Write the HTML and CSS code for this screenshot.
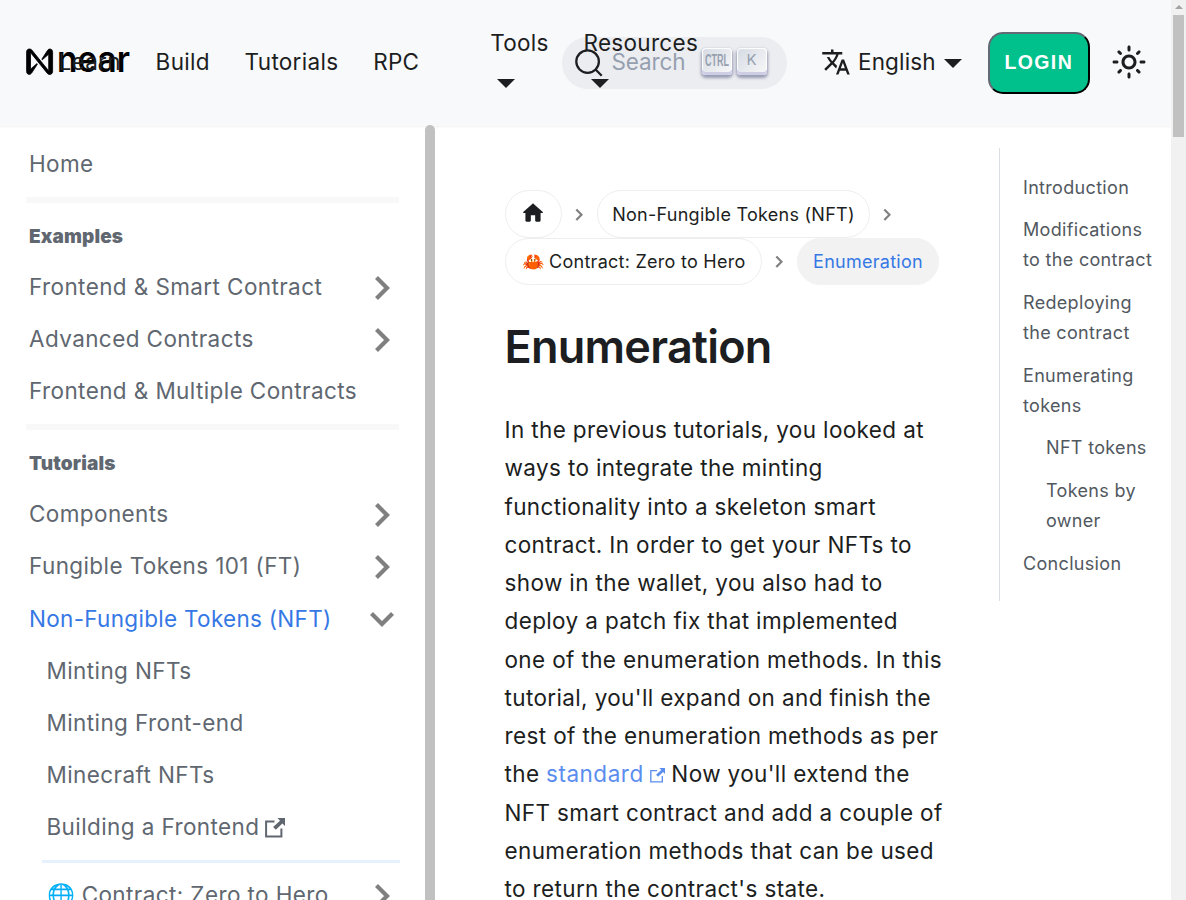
FILE: index.html
```html
<!DOCTYPE html>
<html lang="en">
<head>
<meta charset="utf-8">
<title>Enumeration | NEAR Documentation</title>
<link rel="stylesheet" href="styles.css">
</head>
<body>
<div class="window">
<div class="page">
  <header class="navbar">
    <svg class="logo" width="104" height="28" viewBox="0 0 104 28" role="img" aria-label="near">
      <path class="mark" d="M3.300 1C1.700 1 .6 2.200.6 3.700v20c0 1.500 1.200 2.700 2.700 2.700.9 0 1.800-.5 2.300-1.300l5.700-8.800c.2-.4-.2-.8-.6-.5l-5.500 4.800c-.3.2-.7.100-.7-.3V5.600c0-.4.5-.5.7-.200l16.200 20c.5.600 1.200 1 2 1h.5c1.500 0 2.700-1.200 2.700-2.700v-20C26.600 2.200 25.400 1 23.900 1c-.9 0-1.800.5-2.300 1.300l-5.700 8.800c-.2.400.2.800.6.500l5.500-4.800c.3-.2.7-.1.700.3v14.700c0 .400-.5.500-.7.200L5.800 2c-.5-.6-1.200-1-2-1z"/>
      <text class="wordmark" x="31" y="23.500" textLength="73" lengthAdjust="spacingAndGlyphs">near</text>
    </svg>
    <nav class="links">
      <a>Learn</a><a>Build</a><a>Tutorials</a><a>RPC</a>
      <span class="bar"></span>
      <a class="drop tools">Tools<i class="caret"></i></a>
      <a class="drop resources">Resources<i class="caret"></i></a>
    </nav>
    <div class="search">
      <svg width="30" height="30" viewBox="0 0 20 20"><path d="M14.386 14.386l4.088 4.088-4.088-4.088c-2.942 2.942-7.711 2.942-10.653 0-2.942-2.942-2.942-7.711 0-10.653 2.942-2.942 7.711-2.942 10.653 0 2.942 2.942 2.942 7.711 0 10.653z" fill="none" stroke="#1c1e21" stroke-width="1.5"/></svg>
      <span class="placeholder">Search</span>
      <kbd><svg width="24" height="18" viewBox="0 0 24 18"><text class="ctrl" x="0" y="15" textLength="24" lengthAdjust="spacingAndGlyphs">CTRL</text></svg></kbd>
      <kbd class="key-k">K</kbd>
    </div>
    <div class="language">
      <svg width="30" height="30" viewBox="0 0 24 24"><path fill="currentColor" d="M12.870 15.070l-2.540-2.510.030-.030c1.740-1.940 2.980-4.170 3.710-6.530H17V4h-7V2H8v2H1v1.990h11.170C11.500 7.920 10.440 9.750 9 11.350 8.070 10.320 7.300 9.190 6.690 8h-2c.73 1.630 1.730 3.170 2.980 4.560l-5.090 5.020L4 19l5-5 3.110 3.110.76-2.040zM18.500 10h-2L12 22h2l1.120-3h4.750L21 22h2l-4.500-12zm-2.620 7l1.620-4.330L19.120 17h-3.240z"/></svg>
      <span>English</span><i class="caret"></i>
    </div>
    <button class="login">LOGIN</button>
    <svg class="sun" width="36" height="36" viewBox="0 0 24 24"><path fill="currentColor" d="M12,9c1.650,0,3,1.350,3,3s-1.350,3-3,3s-3-1.350-3-3S10.350,9,12,9 M12,7c-2.760,0-5,2.240-5,5s2.240,5,5,5s5-2.240,5-5 S14.760,7,12,7L12,7z M2,13l2,0c0.550,0,1-0.450,1-1s-0.450-1-1-1l-2,0c-0.550,0-1,0.450-1,1S1.450,13,2,13z M20,13l2,0c0.550,0,1-0.450,1-1 s-0.450-1-1-1l-2,0c-0.550,0-1,0.450-1,1S19.450,13,20,13z M11,2v2c0,0.550,0.450,1,1,1s1-0.450,1-1V2c0-0.550-0.450-1-1-1S11,1.450,11,2z M11,20v2c0,0.550,0.450,1,1,1s1-0.450,1-1v-2c0-0.550-0.450-1-1-1C11.450,19,11,19.450,11,20z M5.990,4.580c-0.390-0.390-1.030-0.390-1.410,0 c-0.390,0.390-0.390,1.030,0,1.410l1.060,1.060c0.390,0.390,1.030,0.390,1.410,0s0.390-1.030,0-1.410L5.990,4.580z M18.360,16.950 c-0.390-0.390-1.030-0.390-1.410,0c-0.390,0.390-0.390,1.030,0,1.410l1.060,1.060c0.390,0.390,1.030,0.390,1.410,0c0.390-0.390,0.390-1.030,0-1.410 L18.360,16.950z M19.420,5.990c0.390-0.390,0.390-1.030,0-1.410c-0.390-0.390-1.030-0.390-1.410,0l-1.060,1.060c-0.390,0.390-0.390,1.030,0,1.410 s1.030,0.390,1.410,0L19.420,5.990z M7.050,18.360c0.390-0.390,0.390-1.030,0-1.410c-0.390-0.390-1.030-0.390-1.410,0l-1.060,1.060 c-0.390,0.390-0.390,1.030,0,1.410s1.030,0.390,1.410,0L7.050,18.360z"/></svg>
  </header>

  <div class="columns">
    <aside class="sidebar">
      <ul class="menu">
        <li><a>Home</a></li>
        <li class="divider"></li>
        <li class="heading">Examples</li>
        <li><a>Frontend &amp; Smart Contract</a><svg class="chev" viewBox="0 0 18 26"><path d="M3.500 2.500 14 13 3.500 23.500"/></svg></li>
        <li><a>Advanced Contracts</a><svg class="chev" viewBox="0 0 18 26"><path d="M3.500 2.500 14 13 3.500 23.500"/></svg></li>
        <li><a>Frontend &amp; Multiple Contracts</a></li>
        <li class="divider"></li>
        <li class="heading">Tutorials</li>
        <li><a>Components</a><svg class="chev" viewBox="0 0 18 26"><path d="M3.500 2.500 14 13 3.500 23.500"/></svg></li>
        <li><a>Fungible Tokens 101 (FT)</a><svg class="chev" viewBox="0 0 18 26"><path d="M3.500 2.500 14 13 3.500 23.500"/></svg></li>
        <li class="active"><a>Non-Fungible Tokens (NFT)</a><svg class="chev open" viewBox="0 0 18 26"><path d="M3.500 2.500 14 13 3.500 23.500"/></svg></li>
        <li class="sub"><a>Minting NFTs</a></li>
        <li class="sub"><a>Minting Front-end</a></li>
        <li class="sub"><a>Minecraft NFTs</a></li>
        <li class="sub"><a>Building a Frontend</a><svg class="ext" width="20" height="20" viewBox="0 0 20 20"><path d="M9.500 3.500H1.100v14.900h15.300V10.500" fill="none" stroke="currentColor" stroke-width="2"/><path fill="currentColor" d="M12.500 0H20v8l-2.600-2.600-6.600 6.300-2.700-2.600L15 2.700z"/></svg></li>
        <li class="subdivider"></li>
        <li class="sub last"><a><span class="globe">🌐</span> Contract: Zero to Hero</a><svg class="chev" viewBox="0 0 18 26"><path d="M3.500 2.500 14 13 3.500 23.500"/></svg></li>
      </ul>
      <div class="side-thumb"></div>
    </aside>

    <main class="article">
      <ul class="crumbs">
        <li><a class="pill home"><svg width="26" height="26" viewBox="0 0 24 24"><path d="M10 19v-5h4v5c0 .550.450 1 1 1h3c.550 0 1-.450 1-1v-7h1.700c.460 0 .680-.570.330-.870L12.670 3.600c-.380-.340-.960-.340-1.340 0l-8.360 7.530c-.340.300-.130.870.330.870H5v7c0 .550.450 1 1 1h3c.550 0 1-.450 1-1z" fill="currentColor"/></svg></a><svg class="sep" viewBox="0 0 8 14"><path d="M1.300 1.500 6.500 6.700 1.300 12"/></svg></li>
        <li><a class="pill nft">Non-Fungible Tokens (NFT)</a><svg class="sep" viewBox="0 0 8 14"><path d="M1.300 1.500 6.500 6.700 1.300 12"/></svg></li>
        <li><a class="pill zero">🦀 Contract: Zero to Hero</a><svg class="sep" viewBox="0 0 8 14"><path d="M1.300 1.500 6.500 6.700 1.300 12"/></svg></li>
        <li><a class="pill current">Enumeration</a></li>
      </ul>
      <h1>Enumeration</h1>
      <p>In the previous tutorials, you looked at<br>ways to integrate the minting<br>functionality into a skeleton smart<br>contract. In order to get your NFTs to<br>show in the wallet, you also had to<br>deploy a patch fix that implemented<br>one of the enumeration methods. In this<br>tutorial, you'll expand on and finish the<br>rest of the enumeration methods as per<br>the <a class="std">standard<svg width="15" height="15" viewBox="0 0 20 20"><path d="M9.500 3.500H1.100v14.900h15.300V10.500" fill="none" stroke="currentColor" stroke-width="1.800"/><path fill="currentColor" d="M12.500 0H20v8l-2.600-2.600-6.600 6.300-2.700-2.600L15 2.700z"/></svg></a> Now you'll extend the<br>NFT smart contract and add a couple of<br>enumeration methods that can be used<br>to return the contract's state.</p>
    </main>

    <nav class="toc">
      <a>Introduction</a>
      <a>Modifications<br>to the contract</a>
      <a>Redeploying<br>the contract</a>
      <a>Enumerating<br>tokens</a>
      <a class="nested">NFT tokens</a>
      <a class="nested">Tokens by<br>owner</a>
      <a>Conclusion</a>
    </nav>
  </div>
</div>
<div class="scrollbar"><i class="arrow"></i><div class="thumb"></div></div>
</div>
</body>
</html>
```

FILE: styles.css
```css
* { box-sizing: border-box; }
html, body { margin: 0; height: 100%; overflow: hidden; }
body { background: #fff; color: #1c1e21; font-family: Inter, "Noto Sans", sans-serif; font-size: 22.5px; }
ul { list-style: none; margin: 0; padding: 0; }
.window { display: flex; height: 900px; }
.page { width: 1171px; height: 900px; overflow: hidden; display: flex; flex-direction: column; }

.navbar { flex: none; height: 126px; padding: 0 0 2px 26px; background: #f8f9fb; box-shadow: 0 1px 2px rgba(0,0,0,.06); display: flex; align-items: center; position: relative; z-index: 2; }
.logo { flex: none; margin-right: -71.500px; overflow: visible; }
.mark { stroke: #000; stroke-width: .8; }
.wordmark { font: 600 36px Inter, sans-serif; }
.links { flex: none; width: 640px; display: flex; align-items: center; position: relative; z-index: 1; letter-spacing: .3px; }
.links a { margin-right: 34.8px; padding-bottom: 2px; white-space: nowrap; }
.bar { width: 2px; height: 30px; background: #949699; margin-right: 36px; }
.links .drop { display: flex; flex-direction: column; height: 66px; padding: 0; line-height: 28px; }
.caret { display: block; border: solid transparent; border-width: 9px 9px 0; border-top-color: #1c1e21; }
.drop .caret { margin: 22px 0 0 7px; width: 18px; }
.search { flex: none; width: 225px; height: 52px; margin: 2px 0 0 -136.500px; padding: 0 19px 0 12px; border-radius: 26px; background: #ebedf0; display: flex; align-items: center; }
.placeholder { margin-left: 7.500px; width: 90px; flex: none; padding-bottom: 3px; color: #969faf; letter-spacing: -.1px; }
kbd { flex: none; width: 30px; height: 27px; margin: -4px 0 0; border-radius: 4px; background: linear-gradient(-225deg, #d5dbe4, #f8f8f8); box-shadow: inset 0 -3px 0 #cdcde6, inset 0 0 1px 1px #fff, 0 2px 3px 1px rgba(30,35,90,.4); color: #969faf; display: flex; justify-content: center; align-items: center; padding-bottom: 3px; font: 15px Inter, sans-serif; }
kbd + kbd { margin-left: 5px; }
.ctrl { font: 700 16px "Liberation Sans", sans-serif; fill: #969faf; }
.language { margin-left: 34px; display: flex; align-items: center; letter-spacing: .15px; }
.language span { margin: 0 8px 0 7px; padding-bottom: 2px; }
.language .caret { margin-top: 3px; }
.login { flex: none; width: 102px; height: 62px; margin: 2px 0 0 26px; padding: 0 0 2px; background: #00c08b; border: 2px outset #1c1e21; border-radius: 15px; color: #fff; font: 700 19.500px "Liberation Sans", Arial, sans-serif; letter-spacing: 1.400px; }
.sun { margin-left: 21px; }

.columns { flex: 1; min-height: 0; display: flex; }
.sidebar { width: 435px; flex: none; display: flex; justify-content: space-between; color: #606770; }
.menu { width: 399px; padding-top: 12px; }
.menu li { height: 52.2px; margin-left: 29px; padding-bottom: 2px; display: flex; align-items: center; letter-spacing: .4px; white-space: nowrap; }
.menu .divider { height: 6px; padding: 0; margin: 6.800px 0 7px 26px; background: #f8f8f8; }
.menu .heading { font-weight: 900; font-size: 19px; height: 51px; padding: 2px 0 0; letter-spacing: .15px; }
.menu .active { color: #3578e5; padding-bottom: 0; letter-spacing: .3px; }
.menu .sub { margin-left: 46.500px; }
.menu .subdivider { height: 3px; padding: 0; margin: 6px -1px 7px 42px; background: #e7f0fd; }
.chev { width: 18px; height: 26px; margin: 3px 8px 0 auto; fill: none; stroke: #808080; stroke-width: 4.200; }
.open { transform: rotate(90deg); margin-top: 1px; }
.ext { margin: 2px 0 0 6px; }
.side-thumb { width: 10px; background: #c1c1c1; border-radius: 5px 5px 0 0; margin-top: -1px; position: relative; z-index: 3; }

.article { width: 564px; flex: none; padding: 64px 50px 0 70px; }
.crumbs { display: flex; flex-wrap: wrap; font-size: 18px; }
.crumbs li { display: flex; align-items: center; height: 47.5px; }
.pill { height: 47.500px; border: 1px solid #eee; border-radius: 24px; display: flex; align-items: center; justify-content: center; white-space: nowrap; letter-spacing: .26px; }
.home { width: 57px; padding: 0 2px 2px 0; }
.nft { width: 273px; padding-top: 1px; }
.zero { width: 257px; }
.current { width: 142px; color: #3578e5; background: #f2f2f2; border-color: #f2f2f2; }
.sep { width: 8px; height: 14px; margin: 2px 14px 0 13px; fill: none; stroke: #808080; stroke-width: 2.200; }
h1 { margin: 34px 0 0 -.5px; font-size: 45px; font-weight: 600; line-height: 56px; letter-spacing: -.75px; }
p { margin: 36px 0 0 -.5px; line-height: 38.250px; white-space: nowrap; letter-spacing: .37px; }
.std { color: #5b8def; letter-spacing: .5px; }
.std svg { margin: 0 0 -1px 6px; }

.toc { width: 172px; height: 453px; margin-top: 22px; border-left: 1px solid #dadde1; padding: 24.600px 0 0 23px; display: flex; flex-direction: column; gap: 12.700px; font-size: 18px; line-height: 30px; color: #525860; white-space: nowrap; letter-spacing: .32px; }
.nested { margin-left: 23px; }

.scrollbar { width: 15px; height: 900px; background: #f1f1f1; display: flex; flex-direction: column; align-items: center; }
.arrow { margin-top: 5px; border: solid transparent; border-width: 0 4px 4px; border-bottom-color: #a3a3a3; }
.thumb { width: 11px; height: 122px; margin-top: 6px; background: #c1c1c1; }
```
